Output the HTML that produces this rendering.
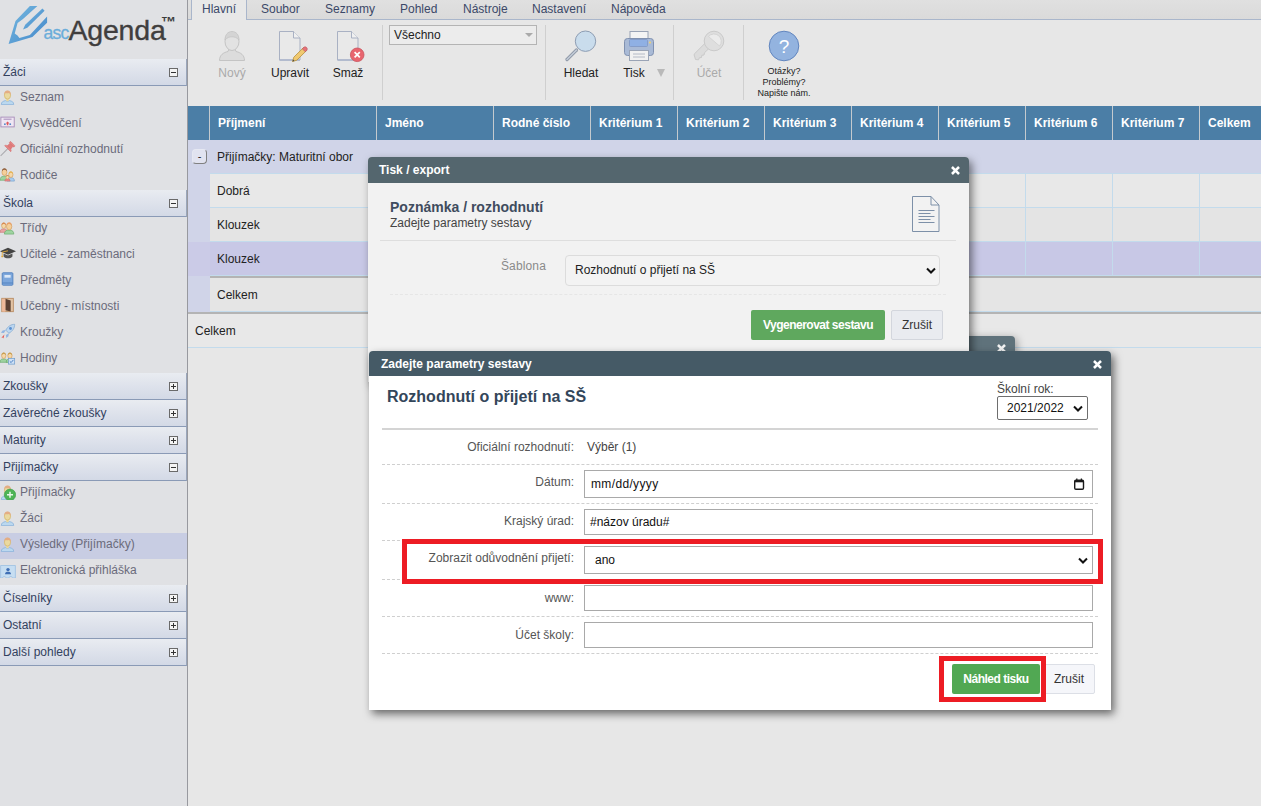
<!DOCTYPE html>
<html lang="cs">
<head>
<meta charset="utf-8">
<title>ascAgenda</title>
<style>
*{box-sizing:border-box;margin:0;padding:0}
html,body{width:1261px;height:806px;overflow:hidden}
body{position:relative;background:#e7e7e7;font-family:"Liberation Sans",Arial,sans-serif;font-size:12px;color:#222}
.abs{position:absolute}
/* sidebar */
#side{position:absolute;left:0;top:0;width:188px;height:806px;background:#e0e1e4;border-right:1px solid #98999f}
.sh{position:absolute;left:0;width:187px;height:27px;background:linear-gradient(#e9ecf1,#dfe3ec 45%,#d3d9e6);border-bottom:1px solid #8a9ab6;border-right:1px solid #9aa6bb;color:#33415e;font-size:12px;line-height:27px;padding-left:3px}
.sh i{position:absolute;left:169px;top:9px;width:9px;height:9px;border:1px solid #6a6a6a;background:#f4f4f4}
.sh i:before{content:"";position:absolute;left:1px;top:3px;width:5px;height:1px;background:#333}
.sh i.p:after{content:"";position:absolute;left:3px;top:1px;width:1px;height:5px;background:#333}
.si{position:absolute;left:0;width:187px;height:26px;color:#6b6b7b;font-size:12px;line-height:22px;padding-left:20px}
.si.sel{background:#c8cde3}
.si svg{position:absolute;left:0;top:3px;width:16px;height:16px}
.si svg[viewBox="0 0 18 18"]{top:2px}
/* ribbon */
#tabs{position:absolute;left:188px;top:0;width:1073px;height:20px;background:linear-gradient(#e0e0e0,#dadada);border-bottom:1px solid #a9b6cb}
.tab{position:absolute;top:0;height:20px;line-height:19px;font-size:12px;color:#3b4868;white-space:nowrap}
.tab.act{background:#e8e8e8;border:1px solid #a9b6cb;border-top:none;border-bottom:none;height:20px}
.rsep{position:absolute;top:25px;width:1px;height:75px;background:#cfcfcf}
.rb{position:absolute;top:66px;font-size:12px;line-height:15px;color:#222;white-space:nowrap;transform:translateX(-50%)}
.rb.dis{color:#aaa}
/* grid */
#gh{position:absolute;left:188px;top:106px;width:1073px;height:34px;background:#4b7ea6}
.hc{position:absolute;top:0;height:34px;border-left:1px solid #c4cace;color:#fff;font-weight:bold;font-size:12px;line-height:34px;padding-left:8px;white-space:nowrap}
.row{position:absolute;left:188px;width:1073px}
.ct{position:absolute;font-size:12px;color:#222;white-space:nowrap;line-height:16px}
.vl{position:absolute;width:1px;background:#c3dbec}
.hl{position:absolute;height:1px;background:#c3dbec}
/* dialogs */
.dlg{position:absolute;border-radius:4px 4px 0 0}
.dt{position:absolute;left:0;top:0;right:0;color:#fff;font-weight:bold;font-size:12px;border-radius:4px 4px 0 0;white-space:nowrap}
.x{position:absolute}
.lbl{position:absolute;font-size:12px;color:#555;white-space:nowrap;text-align:right;line-height:14px}
.inp{position:absolute;border:1px solid #a9a9a9;background:#fff;font-size:12px;color:#111;white-space:nowrap}
.dash{position:absolute;height:0;border-top:1px dashed #cfcfcf}
</style>
</head>
<body>

<!-- ================= SIDEBAR ================= -->
<div id="side">
  <div id="logo" class="abs" style="left:0;top:0;width:187px;height:59px">
<svg class="abs" style="left:0;top:0" width="60" height="59" viewBox="0 0 60 59"><defs><linearGradient id="lg" x1="0.150" y1="0.100" x2="0.900" y2="0.800"><stop offset="0" stop-color="#70b3dd"/><stop offset="1" stop-color="#4a8ecd"/></linearGradient></defs><path d="M29.900 6.100L37.400 6.100L23 19L17.600 23L14.700 33.500Q18 35 19.400 38.100L29.900 34.900L47.100 16.500L47.100 22.700L32.400 37L8.600 43.900L15.500 20.900Z" fill="url(#lg)"/><path d="M42.400 8.600L44.600 10.800L27.300 27.700L23 29.500L25.200 24.800Z" fill="url(#lg)"/></svg>
<span class="abs" style="left:43.500px;top:22.200px;font-size:17.500px;line-height:22px;color:#6badda;letter-spacing:-.75px;-webkit-text-stroke:.3px #6badda">asc</span>
<span class="abs" style="left:68.500px;top:9.500px;font-size:28.500px;line-height:40px;color:#403e3e;letter-spacing:-.2px;-webkit-text-stroke:.35px #403e3e">Agenda</span>
<span class="abs" style="left:161px;top:14px;font-size:15px;line-height:16px;font-weight:bold;color:#3b3b3b">™</span>

</div><!--/logo-->
  <div id="menu">
<div class="sh" style="top:59px">Žáci<i class="m"></i></div>
<div class="si" style="top:86px"><svg width="16" height="16" viewBox="0 0 16 16"><path d="M1.300 15.600c0-2.600 1.600-3.500 4.400-4l1.800 .9 1.800-.9c2.800 .5 4.400 1.400 4.400 4z" fill="#bbd8ef" stroke="#8ab3da" stroke-width=".8"/><path d="M6.200 9.500h2.600v2.300l-1.300 .8-1.300-.8z" fill="#ead9a0"/><ellipse cx="7.500" cy="6.200" rx="3.100" ry="3.900" fill="#ead9a0" stroke="#d3b665" stroke-width=".7"/><path d="M4.200 6.300c-.3-3 1-4.800 3.300-4.800s3.600 1.800 3.300 4.800c-.5-1.500-1.100-2.200-1.800-2.400-1 .5-2.600 .5-3.400 .1-.7 .4-1.100 1.100-1.400 2.300z" fill="#e4ad84"/></svg>Seznam</div>
<div class="si" style="top:112px"><svg width="18" height="18" viewBox="0 0 18 18"><rect x="1" y="3.500" width="15" height="11" fill="#efe6f3" stroke="#a58bb8" stroke-width="1"/><rect x="4" y="5.300" width="9" height="1" fill="#9a7fb4"/><path d="M8.500 8.500l2.200 2.200h-1.400v2h-1.600v-2h-1.400z" fill="#e0575b"/><circle cx="5.500" cy="11.500" r="1" fill="#4f88c9"/><circle cx="11.500" cy="11.500" r="1" fill="#4f88c9"/></svg>Vysvědčení</div>
<div class="si" style="top:138px"><svg width="16" height="16" viewBox="0 0 16 16"><g transform="translate(8.400 7) rotate(45)"><path d="M0 .5v10.500" stroke="#a9a9ad" stroke-width="1"/><rect x="-3.300" y="-6.200" width="6.600" height="1.900" rx=".8" fill="#e68585" stroke="#cf6a6a" stroke-width=".5"/><path d="M-2-4.400h4l.4 3.600h-4.800z" fill="#e27a7a" stroke="#cf6a6a" stroke-width=".5"/><path d="M-4.300 1c0-1.400 1.600-2 4.300-2s4.300 .6 4.300 2z" fill="#e68585" stroke="#cf6a6a" stroke-width=".5"/></g></svg>Oficiální rozhodnutí</div>
<div class="si" style="top:164px"><svg width="18" height="18" viewBox="0 0 18 18"><path d="M0 16c0-3 1.500-4 3.500-4.500h3c2 .5 3.500 1.500 3.500 4.500z" fill="#9ed3a0" stroke="#62a866" stroke-width=".7"/><ellipse cx="5" cy="7" rx="2.800" ry="3.600" fill="#f4cf9a" stroke="#d09a55" stroke-width=".7"/><path d="M2.200 6c0-2.500 1.200-3.600 2.800-3.600s2.800 1.100 2.800 3.600c-1-1.400-1.800-1.700-2.800-1.700s-1.800 .3-2.800 1.700z" fill="#8a5a3a"/><path d="M8 17c0-2.600 1.200-3.400 2.800-3.800h2.600c1.600 .4 2.800 1.200 2.800 3.800z" fill="#a9cdee" stroke="#6e9ccc" stroke-width=".7"/><ellipse cx="12.200" cy="9.800" rx="2.400" ry="3.100" fill="#f6d8a8" stroke="#d09a55" stroke-width=".7"/><path d="M9.800 9c0-2.200 1-3.200 2.400-3.200s2.400 1 2.400 3.200c-.8-1.200-1.500-1.500-2.400-1.500s-1.600 .3-2.400 1.500z" fill="#e7b44f"/><path d="M5.500 17c0-1.800 .8-2.400 2-2.600h1.800c1.200 .2 2 .8 2 2.600z" fill="#e98a8a" stroke="#c96a6a" stroke-width=".6"/><ellipse cx="8.400" cy="12.600" rx="1.700" ry="2" fill="#f6d8a8" stroke="#d09a55" stroke-width=".6"/><path d="M6.700 12c0-1.400 .7-2 1.700-2s1.700 .6 1.700 2c-.6-.7-1-.9-1.700-.9s-1.100 .2-1.700 .9z" fill="#c98a4a"/></svg>Rodiče</div>
<div class="sh" style="top:190px">Škola<i class="m"></i></div>
<div class="si" style="top:217px"><svg width="18" height="18" viewBox="0 0 18 18"><path d="M0 15c0-2.600 1.200-3.400 2.800-3.800h2.600c1.600 .4 2.800 1.200 2.800 3.800z" fill="#e9a3a3" stroke="#c97272" stroke-width=".7"/><ellipse cx="4.200" cy="7.500" rx="2.400" ry="3.100" fill="#f6d8a8" stroke="#d09a55" stroke-width=".7"/><path d="M1.800 7c0-2.200 1-3.200 2.400-3.200s2.400 1 2.400 3.200c-.8-1.200-1.500-1.500-2.400-1.500s-1.600 .3-2.400 1.500z" fill="#d98a52"/><path d="M5 17c0-3 1.500-4 3.500-4.500h3.500c2 .5 3.500 1.500 3.500 4.500z" fill="#9ed3a0" stroke="#62a866" stroke-width=".7"/><ellipse cx="10.300" cy="8.500" rx="3" ry="3.800" fill="#f4cf9a" stroke="#d09a55" stroke-width=".7"/><path d="M7.300 7.500c0-2.700 1.300-3.800 3-3.800s3 1.100 3 3.800c-1-1.500-1.900-1.900-3-1.900s-2 .4-3 1.900z" fill="#e9a06a"/></svg>Třídy</div>
<div class="si" style="top:243px"><svg width="18" height="18" viewBox="0 0 18 18"><path d="M9 3l9 4-9 4-9-4z" fill="#444"/><path d="M4 9.500v3.500c1.500 1.600 3.200 2 5 2s3.500-.4 5-2v-3.500l-5 2.200z" fill="#555"/><path d="M9 6.500l-6.500 1.500v4" stroke="#e0a93a" stroke-width="1" fill="none"/><circle cx="2.500" cy="12.800" r="1.100" fill="#e0a93a"/></svg>Učitelé - zaměstnanci</div>
<div class="si" style="top:269px"><svg width="18" height="18" viewBox="0 0 18 18"><rect x="2.500" y="2" width="12" height="14" rx="1" fill="#7da7dc" stroke="#4f7fbd" stroke-width="1"/><rect x="5" y="4.500" width="7" height="3" fill="#dbe8f7"/><path d="M2.500 13.500h12" stroke="#4f7fbd" stroke-width="1"/></svg>Předměty</div>
<div class="si" style="top:295px"><svg width="18" height="18" viewBox="0 0 18 18"><rect x="2" y="1.500" width="13" height="15" fill="#e2c3a4" stroke="#b98c62" stroke-width="1"/><path d="M6 2l6 1.800v12.400l-6 -1.200z" fill="#5a4033"/><path d="M2.500 2h3.500v14.500h-3.500z" fill="#efb99a"/></svg>Učebny - místnosti</div>
<div class="si" style="top:321px"><svg width="18" height="18" viewBox="0 0 18 18"><path d="M16.500 1.500c-4 0-7.500 2-10 6.500l3.500 3.500c4.500-2.500 6.500-6 6.500-10z" fill="#bcd6f0" stroke="#7fa8cf" stroke-width=".8"/><circle cx="11.800" cy="6.200" r="1.600" fill="#5a8fd0"/><path d="M6.500 8l-3.500 .5-2 2.500 3.500 .3z" fill="#8fb5e3"/><path d="M10 11.500l-.5 3.500-2.500 2-.3-3.500z" fill="#8fb5e3"/><path d="M5 13l-3.500 3.500 1.500-.2 .8 1.200z" fill="#e5534e"/></svg>Kroužky</div>
<div class="si" style="top:347px"><svg width="18" height="18" viewBox="0 0 18 18"><path d="M0 15c0-2.600 1.200-3.400 2.800-3.800h2.600c1.600 .4 2.800 1.200 2.800 3.800z" fill="#9ed3a0" stroke="#62a866" stroke-width=".7"/><ellipse cx="4.200" cy="7.500" rx="2.400" ry="3.100" fill="#f6d8a8" stroke="#d09a55" stroke-width=".7"/><path d="M1.800 7c0-2.200 1-3.200 2.400-3.200s2.400 1 2.400 3.200c-.8-1.200-1.500-1.500-2.400-1.500s-1.600 .3-2.400 1.500z" fill="#c9a052"/><path d="M7 15c0-2.600 1.200-3.400 2.800-3.800h2.600c1.600 .4 2.800 1.200 2.800 3.800z" fill="#9ed3a0" stroke="#62a866" stroke-width=".7"/><ellipse cx="11.200" cy="7.500" rx="2.400" ry="3.100" fill="#f6d8a8" stroke="#d09a55" stroke-width=".7"/><path d="M8.800 7c0-2.200 1-3.200 2.400-3.200s2.400 1 2.400 3.200c-.8-1.200-1.500-1.500-2.400-1.500s-1.600 .3-2.400 1.500z" fill="#c9a052"/><rect x="9.500" y="10.500" width="7" height="6.500" fill="#cfe1f5" stroke="#6e9ccc" stroke-width=".8"/><path d="M11 13.800l1.500 1.500 2.500-3" stroke="#3f78c0" stroke-width="1" fill="none"/></svg>Hodiny</div>
<div class="sh" style="top:373px">Zkoušky<i class="p"></i></div>
<div class="sh" style="top:400px">Závěrečné zkoušky<i class="p"></i></div>
<div class="sh" style="top:427px">Maturity<i class="p"></i></div>
<div class="sh" style="top:454px">Přijímačky<i class="m"></i></div>
<div class="si" style="top:481px"><svg width="16" height="16" viewBox="0 0 16 16"><path d="M1.300 15.600c0-2.600 1.600-3.500 4.400-4h3.600c2.800 .5 4.400 1.400 4.400 4z" fill="#bbd8ef" stroke="#8ab3da" stroke-width=".8"/><ellipse cx="7.500" cy="6.200" rx="3.100" ry="3.900" fill="#ead9a0" stroke="#d3b665" stroke-width=".7"/><path d="M4.200 6.300c-.3-3 1-4.800 3.300-4.800s3.600 1.800 3.300 4.800c-.5-1.500-1.100-2.200-1.800-2.400-1 .5-2.600 .5-3.400 .1-.7 .4-1.100 1.100-1.400 2.300z" fill="#e4ad84"/><circle cx="10" cy="10.800" r="5.700" fill="#4eb457" stroke="#3a9c44" stroke-width=".6"/><path d="M10 7.800v6M7 10.800h6" stroke="#e8f6e9" stroke-width="1.500"/></svg>Přijímačky</div>
<div class="si" style="top:507px"><svg width="16" height="16" viewBox="0 0 16 16"><path d="M1.300 15.600c0-2.600 1.600-3.500 4.400-4l1.800 .9 1.800-.9c2.800 .5 4.400 1.400 4.400 4z" fill="#bbd8ef" stroke="#8ab3da" stroke-width=".8"/><path d="M6.200 9.500h2.600v2.300l-1.300 .8-1.300-.8z" fill="#ead9a0"/><ellipse cx="7.500" cy="6.200" rx="3.100" ry="3.900" fill="#ead9a0" stroke="#d3b665" stroke-width=".7"/><path d="M4.200 6.300c-.3-3 1-4.800 3.300-4.800s3.600 1.800 3.300 4.800c-.5-1.500-1.100-2.200-1.800-2.400-1 .5-2.600 .5-3.400 .1-.7 .4-1.100 1.100-1.400 2.300z" fill="#e4ad84"/></svg>Žáci</div>
<div class="si sel" style="top:533px"><svg width="16" height="16" viewBox="0 0 16 16"><path d="M1.300 15.600c0-2.600 1.600-3.500 4.400-4l1.800 .9 1.800-.9c2.800 .5 4.400 1.400 4.400 4z" fill="#bbd8ef" stroke="#8ab3da" stroke-width=".8"/><path d="M6.200 9.500h2.600v2.300l-1.300 .8-1.300-.8z" fill="#ead9a0"/><ellipse cx="7.500" cy="6.200" rx="3.100" ry="3.900" fill="#ead9a0" stroke="#d3b665" stroke-width=".7"/><path d="M4.200 6.300c-.3-3 1-4.800 3.300-4.800s3.600 1.800 3.300 4.800c-.5-1.500-1.100-2.200-1.800-2.400-1 .5-2.600 .5-3.400 .1-.7 .4-1.100 1.100-1.400 2.300z" fill="#e4ad84"/></svg>Výsledky (Přijímačky)</div>
<div class="si" style="top:559px"><svg width="16" height="16" viewBox="0 0 16 16"><path d="M.600 3.500h14.800v12.500h-2.800l-1-1.400h-1.800l-1 1.400h-2.600l-1-1.400h-1.800l-1 1.400h-1.800z" fill="#c6def2" stroke="#9cc0e2" stroke-width=".8"/><circle cx="8" cy="7.600" r="1.700" fill="#3f6fb5"/><path d="M5 12.200c0-1.900 1.400-2.500 3-2.500s3 .6 3 2.500z" fill="#3f6fb5"/></svg>Elektronická přihláška</div>
<div class="sh" style="top:585px">Číselníky<i class="p"></i></div>
<div class="sh" style="top:612px">Ostatní<i class="p"></i></div>
<div class="sh" style="top:639px">Další pohledy<i class="p"></i></div>
</div><!--/menu-->
</div>

<!-- ================= RIBBON ================= -->
<div id="tabs">
<div class="tab act" style="left:3px;width:56px;padding-left:10px">Hlavní</div>
<div class="tab" style="left:73px">Soubor</div>
<div class="tab" style="left:137px">Seznamy</div>
<div class="tab" style="left:212px">Pohled</div>
<div class="tab" style="left:275px">Nástroje</div>
<div class="tab" style="left:344px">Nastavení</div>
<div class="tab" style="left:423px">Nápověda</div>

</div><!--/tabs-->
<div id="ribbon">
<div class="rsep" style="left:382px"></div>
<div class="rsep" style="left:545px"></div>
<div class="rsep" style="left:673px"></div>
<div class="rsep" style="left:743px"></div>
<!-- Novy -->
<svg class="abs" style="left:216px;top:30px" width="32" height="32" viewBox="0 0 32 32"><path d="M3.500 30.500c0-5.500 4-8 8.500-9l1-2.500h6l1 2.500c4.500 1 8.500 3.500 8.500 9z" fill="#dcdcdc" stroke="#c4c4c4" stroke-width="1"/><ellipse cx="16" cy="11.500" rx="7" ry="9" fill="#e2e2e2" stroke="#c4c4c4" stroke-width="1"/><path d="M9 10c0-5.500 3-8.500 7-8.500s7 3 7 8.500c-2.500-2.500-4-3.200-7-3.200s-4.500 .7-7 3.200z" fill="#d4d4d4" stroke="#c4c4c4" stroke-width=".8"/></svg>
<div class="rb dis" style="left:232px">Nový</div>
<!-- Upravit -->
<svg class="abs" style="left:276px;top:30px" width="32" height="33" viewBox="0 0 32 33"><path d="M3.500 1.500h14l6.500 6.500v22h-20.500z" fill="#e9e9e9" stroke="#a9b1c3" stroke-width="1"/><path d="M3.500 30h20.500" stroke="#a9b4cc" stroke-width="1.400"/><path d="M17.500 1.500v6.500h6.500" fill="#f0f0f0" stroke="#a9b1c3" stroke-width="1"/><path d="M16.500 31.500l1.300-4.300 9.800-9.700 3 3-9.800 9.700z" fill="#f0c970" stroke="#b58f3e" stroke-width=".8"/><path d="M26.300 18.800l1.300-1.300c.9-.9 2.100-.9 3 0s.9 2.100 0 3l-1.300 1.300z" fill="#e6727a" stroke="#b5545c" stroke-width=".6"/><path d="M16.500 31.500l.6-2 1.400 1.400z" fill="#444"/></svg>
<div class="rb" style="left:290px">Upravit</div>
<!-- Smaz -->
<svg class="abs" style="left:334px;top:30px" width="32" height="33" viewBox="0 0 32 33"><path d="M3.500 1.500h14l6.500 6.500v22h-20.500z" fill="#e9e9e9" stroke="#a9b1c3" stroke-width="1"/><path d="M3.500 30h20.500" stroke="#a9b4cc" stroke-width="1.400"/><path d="M17.500 1.500v6.500h6.500" fill="#f0f0f0" stroke="#a9b1c3" stroke-width="1"/><circle cx="23.200" cy="24.800" r="6.800" fill="#e8656f" stroke="#c9525c" stroke-width=".8"/><path d="M20.600 22.200l5.200 5.200M25.800 22.200l-5.200 5.200" stroke="#fff" stroke-width="1.700"/></svg>
<div class="rb" style="left:348px">Smaž</div>
<!-- combo -->
<div class="abs" style="left:389px;top:25px;width:148px;height:20px;border:1px solid #b4b4b4;background:#ececec;font-size:12px;line-height:19px;padding-left:4px;color:#222">Všechno<span class="abs" style="right:3px;top:7px;width:0;height:0;border:4px solid transparent;border-top:4px solid #aaa;border-bottom:none"></span></div>
<!-- Hledat -->
<svg class="abs" style="left:564px;top:29px" width="34" height="34" viewBox="0 0 34 34"><path d="M3 30.500l9.500-9.500" stroke="#8d97a6" stroke-width="3.200" stroke-linecap="round"/><path d="M3 30.500l9.500-9.500" stroke="#c2cad6" stroke-width="1.600" stroke-linecap="round"/><circle cx="21.500" cy="12.200" r="10.200" fill="#c9dcec" stroke="#8d9db3" stroke-width="1"/></svg>
<div class="rb" style="left:581px">Hledat</div>
<!-- Tisk -->
<svg class="abs" style="left:623px;top:30px" width="32" height="32" viewBox="0 0 32 32"><rect x="7" y="1.500" width="18" height="10" fill="#f4f4f4" stroke="#9aa4b6" stroke-width="1"/><rect x="1.500" y="8.500" width="29" height="17" rx="3" fill="#a9bad6" stroke="#8091b0" stroke-width="1"/><rect x="6.500" y="9.500" width="18" height="7" rx="1" fill="#8fb0e4" stroke="#7f97c4" stroke-width=".8"/><circle cx="27" cy="12.500" r="1" fill="#f3d46a"/><rect x="6.500" y="20.500" width="19" height="10" fill="#f1f1f1" stroke="#9aa4b6" stroke-width="1"/><path d="M10 24h12M10 27h12" stroke="#b4bac6" stroke-width="1"/></svg>
<div class="rb" style="left:634px">Tisk</div>
<span class="abs" style="left:657px;top:69px;width:0;height:0;border:4.500px solid transparent;border-top:8px solid #b9b9b9;border-bottom:none"></span>
<!-- Ucet -->
<svg class="abs" style="left:693px;top:30px" width="32" height="32" viewBox="0 0 32 32"><path d="M12.800 12.500l-11 11c-.8 .8-.8 2 0 3.500l.7 2.500 3 .3 .8-2 2.200-.3 .3-2.200 2.200-.3 .5-2.300 5.500-5.200z" fill="#dcdcdc" stroke="#cacaca" stroke-width="1"/><circle cx="21" cy="11" r="9.800" fill="#dedede" stroke="#cacaca" stroke-width="1"/><path d="M15.500 6.500a7 7 0 0 1 11 9.500z" fill="#ebebeb" stroke="#cfcfcf" stroke-width=".8"/></svg>
<div class="rb dis" style="left:709px">Účet</div>
<!-- help -->
<svg class="abs" style="left:768px;top:30px" width="32" height="32" viewBox="0 0 32 32"><circle cx="16" cy="16" r="14.800" fill="#93b3df" stroke="#6286bf" stroke-width="1"/><text x="16" y="23" text-anchor="middle" font-family="Liberation Sans, Arial, sans-serif" font-size="19" fill="#fff">?</text></svg>
<div class="abs" style="left:734px;top:66px;width:100px;text-align:center;font-size:9px;line-height:11px;color:#222">Otázky?<br>Problémy?<br>Napište nám.</div>

</div><!--/ribbon-->

<!-- ================= GRID ================= -->
<div id="grid">
<div id="gh">
<div class="hc" style="left:21px;width:167px">Příjmení</div>
<div class="hc" style="left:188px;width:117px">Jméno</div>
<div class="hc" style="left:305px;width:97px">Rodné číslo</div>
<div class="hc" style="left:402px;width:87px">Kritérium 1</div>
<div class="hc" style="left:489px;width:87px">Kritérium 2</div>
<div class="hc" style="left:576px;width:87px">Kritérium 3</div>
<div class="hc" style="left:663px;width:87px">Kritérium 4</div>
<div class="hc" style="left:750px;width:87px">Kritérium 5</div>
<div class="hc" style="left:837px;width:87px">Kritérium 6</div>
<div class="hc" style="left:924px;width:87px">Kritérium 7</div>
<div class="hc" style="left:1011px;width:62px">Celkem</div>
</div>
<div class="row" style="top:140px;height:172px;background:#d0d4e8"></div><div class="hl" style="left:210px;top:173px;width:1051px"></div>
<div class="abs" style="left:192px;top:149px;width:15px;height:15px;border:1px solid #e6e8f2;border-right-color:#808080;border-bottom-color:#808080;border-radius:4px;background:#e1e3f0;font-size:11px;line-height:12px;text-align:center;color:#222">-</div>
<div class="ct" style="left:217px;top:149px">Přijímačky: Maturitní obor</div>
<div class="abs" style="left:210px;top:174px;width:1051px;height:34px;background:#e8e8e8;border-bottom:1px solid #c3dbec"></div>
<div class="ct" style="left:217px;top:183px">Dobrá</div>
<div class="abs" style="left:210px;top:208px;width:1051px;height:34px;background:#e4e4e4;border-bottom:1px solid #c3dbec"></div>
<div class="ct" style="left:217px;top:217px">Klouzek</div>
<div class="abs" style="left:210px;top:242px;width:1051px;height:34px;background:#c8c8e6;border-bottom:1px solid #c3dbec"></div>
<div class="ct" style="left:217px;top:251px">Klouzek</div>
<div class="abs" style="left:188px;top:242px;width:22px;height:34px;background:#cbcbe7"></div>
<div class="vl" style="left:376px;top:174px;height:102px"></div>
<div class="vl" style="left:493px;top:174px;height:102px"></div>
<div class="vl" style="left:590px;top:174px;height:102px"></div>
<div class="vl" style="left:677px;top:174px;height:102px"></div>
<div class="vl" style="left:764px;top:174px;height:102px"></div>
<div class="vl" style="left:851px;top:174px;height:102px"></div>
<div class="vl" style="left:938px;top:174px;height:102px"></div>
<div class="vl" style="left:1025px;top:174px;height:102px"></div>
<div class="vl" style="left:1112px;top:174px;height:102px"></div>
<div class="vl" style="left:1199px;top:174px;height:102px"></div>
<div class="abs" style="left:210px;top:276px;width:1051px;height:36px;background:#e5e5e5;border-top:2px solid #b4b4b4;border-bottom:1px solid #c3dbec"></div>
<div class="ct" style="left:217px;top:287px">Celkem</div>
<div class="abs" style="left:188px;top:312px;width:1073px;height:36px;background:#e8e8e8;border-top:2px solid #b4b4b4;border-bottom:1px solid #c3dbec"></div>
<div class="ct" style="left:195px;top:323px">Celkem</div>
</div><!--/grid-->

<!-- ================= DIALOGS ================= -->
<div id="dlg3">
<div class="abs" style="left:700px;top:336px;width:315px;height:30px;background:#5f727b;border-radius:4px 4px 0 0;box-shadow:2px 2px 8px rgba(0,0,0,.35)"></div>
<svg class="abs" style="left:996px;top:343px" width="11" height="11" viewBox="0 0 11 11"><path d="M2.900 2.900l5.200 5.200M8.100 2.900l-5.200 5.200" stroke="#f2f2f2" stroke-width="2.600" stroke-linecap="square"/></svg>

</div><!--/dlg3-->
<div id="dlg1">
<div class="abs" style="left:368px;top:157px;width:601px;height:225px;background:#f2f2f2;border-radius:4px 4px 0 0;box-shadow:3px 4px 9px rgba(0,0,0,.5)">
<div class="dt" style="height:26px;line-height:27px;background:#54666e;padding-left:11px">Tisk / export</div>
<svg class="abs" style="left:582px;top:8px" width="11" height="11" viewBox="0 0 11 11"><path d="M2.900 2.900l5.200 5.200M8.100 2.900l-5.200 5.200" stroke="#fff" stroke-width="2.600" stroke-linecap="square"/></svg>
<div class="abs" style="left:22px;top:42px;font-size:14px;line-height:17px;font-weight:bold;color:#3f4c5e;white-space:nowrap">Poznámka / rozhodnutí</div>
<div class="abs" style="left:22px;top:59px;font-size:12px;line-height:15px;color:#444;white-space:nowrap">Zadejte parametry sestavy</div>
<svg class="abs" style="left:543px;top:38px" width="30" height="38" viewBox="0 0 30 38"><path d="M1.500 1.500h18.500l8 8.500v26.500h-26.500z" fill="none" stroke="#7d90a8" stroke-width="1"/><path d="M20 1.500v8.500h8" fill="none" stroke="#7d90a8" stroke-width="1"/><path d="M7.500 15.500h16M7.500 18.500h12M7.500 21.500h16M7.500 24.500h12M7.500 27.500h16" stroke="#7d90a8" stroke-width="1"/></svg>
<div class="abs" style="left:12px;top:83px;width:576px;height:1px;background:#dedede"></div>
<div class="abs" style="left:78px;top:102px;width:100px;text-align:right;font-size:12px;line-height:15px;color:#8a8a8a;letter-spacing:.15px">Šablona</div>
<div class="abs" style="left:197px;top:98px;width:375px;height:31px;border:1px solid #dcdcdc;border-radius:4px;background:#f3f3f3;font-size:12px;line-height:29px;padding-left:9px;color:#222">Rozhodnutí o přijetí na SŠ<svg class="abs" style="left:359.500px;top:11px" width="10" height="8" viewBox="0 0 10 8"><path d="M1 1.500l4 4 4-4" fill="none" stroke="#111" stroke-width="2"/></svg></div>
<div class="dash" style="left:22px;top:137px;width:556px;border-top-color:#e6e6e6"></div>
<div class="abs" style="left:383px;top:153px;width:134px;height:30px;background:#5fa85e;border-radius:2px;color:#fff;font-weight:bold;font-size:12px;line-height:30px;text-align:center;letter-spacing:-.5px">Vygenerovat sestavu</div>
<div class="abs" style="left:523px;top:153px;width:52px;height:30px;background:#e9ebf0;border:1px solid #d3d6dd;border-radius:2px;color:#333;font-size:12px;line-height:28px;text-align:center">Zrušit</div>
</div>

</div><!--/dlg1-->
<div id="dlg2">
<div class="abs" style="left:369px;top:351px;width:742px;height:359px;background:#fff;border-radius:4px 4px 0 0;box-shadow:3px 4px 9px rgba(0,0,0,.55)">
<div class="dt" style="height:25px;line-height:26px;background:#455a66;padding-left:12px">Zadejte parametry sestavy</div>
<svg class="abs" style="left:723px;top:8px" width="11" height="11" viewBox="0 0 11 11"><path d="M2.900 2.900l5.200 5.200M8.100 2.900l-5.200 5.200" stroke="#fff" stroke-width="2.600" stroke-linecap="square"/></svg>
<div class="abs" style="left:18px;top:36px;font-size:16px;line-height:20px;font-weight:bold;color:#33465a;white-space:nowrap">Rozhodnutí o přijetí na SŠ</div>
<div class="abs" style="left:628px;top:31px;font-size:12px;line-height:14px;color:#444;white-space:nowrap">Školní rok:</div>
<div class="abs" style="left:628px;top:45px;width:91px;height:24px;border:1px solid #6e6e6e;border-radius:2px;background:#fff;font-size:12px;line-height:22px;padding-left:9px;color:#111">2021/2022<svg class="abs" style="left:75px;top:8px" width="10" height="8" viewBox="0 0 10 8"><path d="M1 1.500l4 4 4-4" fill="none" stroke="#111" stroke-width="2"/></svg></div>
<div class="abs" style="left:13px;top:77px;width:716px;height:2px;background:#d4d4d4"></div>
<!-- rows -->
<div class="lbl" style="left:5px;top:89px;width:200px">Oficiální rozhodnutí:</div>
<div class="abs" style="left:218px;top:89px;font-size:12px;line-height:14px;color:#444">Výběr (1)</div>
<div class="dash" style="left:13px;top:113px;width:716px"></div>
<div class="lbl" style="left:5px;top:124px;width:200px">Dátum:</div>
<div class="inp" style="left:215px;top:119px;width:509px;height:28px;line-height:26px;padding-left:6px;letter-spacing:.35px">mm/dd/yyyy<svg class="abs" style="left:487px;top:6px" width="14" height="14" viewBox="0 0 14 14"><rect x="2.700" y="3.200" width="8.800" height="9" rx="1.200" fill="none" stroke="#1a1a1a" stroke-width="1.400"/><path d="M2.700 3.500h8.800v1.800h-8.800z" fill="#1a1a1a"/><path d="M4.800 1.500v2M9.400 1.500v2" stroke="#1a1a1a" stroke-width="1.300"/></svg></div>
<div class="dash" style="left:13px;top:152px;width:716px"></div>
<div class="lbl" style="left:5px;top:163px;width:200px">Krajský úrad:</div>
<div class="inp" style="left:215px;top:158px;width:509px;height:26px;line-height:24px;padding-left:5px">#názov úradu#</div>
<div class="dash" style="left:13px;top:189px;width:716px"></div>
<div class="lbl" style="left:5px;top:200px;width:200px">Zobrazit odůvodnění přijetí:</div>
<div class="inp" style="left:215px;top:195px;width:509px;height:28px;line-height:26px;padding-left:10px">ano<svg class="abs" style="left:493px;top:10px" width="10" height="8" viewBox="0 0 10 8"><path d="M1 1.500l4 4 4-4" fill="none" stroke="#111" stroke-width="2"/></svg></div>
<div class="dash" style="left:13px;top:228px;width:716px"></div>
<div class="lbl" style="left:5px;top:240px;width:200px">www:</div>
<div class="inp" style="left:215px;top:234px;width:509px;height:26px"></div>
<div class="dash" style="left:13px;top:265px;width:716px"></div>
<div class="lbl" style="left:5px;top:277px;width:200px">Účet školy:</div>
<div class="inp" style="left:215px;top:271px;width:509px;height:26px"></div>
<div class="dash" style="left:13px;top:302px;width:716px"></div>
<!-- buttons -->
<div class="abs" style="left:583px;top:313px;width:88px;height:30px;background:#51a853;border-radius:2px;color:#fff;font-weight:bold;font-size:12px;line-height:30px;text-align:center;letter-spacing:-.5px">Náhled tisku</div>
<div class="abs" style="left:672px;top:313px;width:54px;padding-left:2px;height:30px;background:#f5f6fa;border:1px solid #dcdfe6;border-radius:2px;color:#333;font-size:12px;line-height:28px;text-align:center">Zrušit</div>
<!-- red highlights -->
<div class="abs" style="left:33px;top:188px;width:701px;height:45px;border:5px solid #ed1c24"></div>
<div class="abs" style="left:570px;top:305px;width:107px;height:46px;border:5px solid #ed1c24"></div>
</div>

</div><!--/dlg2-->

</body>
</html>
